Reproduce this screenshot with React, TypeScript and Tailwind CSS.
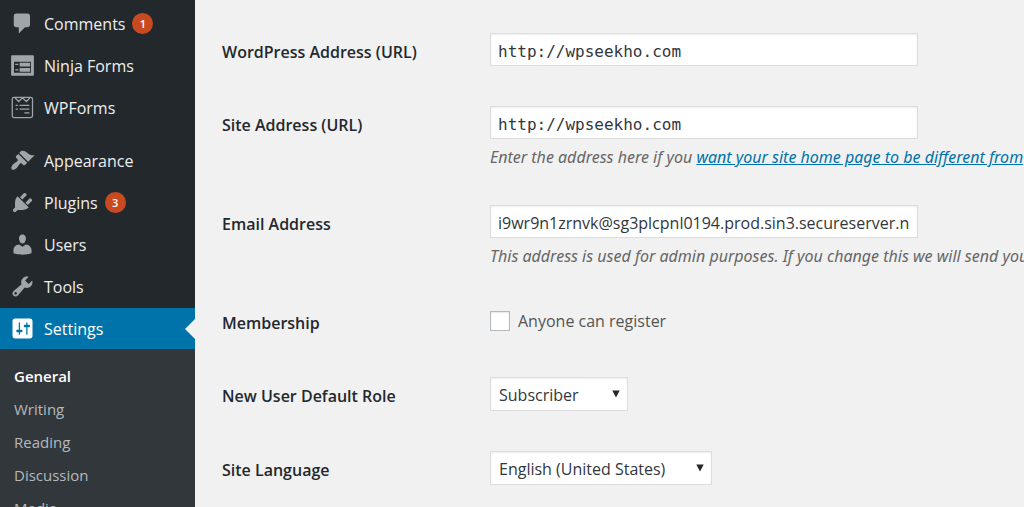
import type { ReactNode } from 'react';

type MenuItem = { label: string; icon: ReactNode; count?: number; current?: boolean };

function Icon({ children }: { children: ReactNode }) {
  return (
    <svg viewBox="0 0 20 20" fill="currentColor" fillRule="evenodd" aria-hidden="true" className="size-[25px] shrink-0">
      {children}
    </svg>
  );
}

const contentItems: MenuItem[] = [
  {
    label: 'Comments',
    count: 1,
    icon: <path d="M5 2h9c1.1 0 2 .9 2 2v7c0 1.1-.9 2-2 2h-2l-5 5v-5H5c-1.1 0-2-.9-2-2V4c0-1.1.9-2 2-2z" />,
  },
  {
    label: 'Ninja Forms',
    icon: (
      <path d="M1.800 1.800h16.400c.5 0 .9.4.9.9v14.600c0 .5-.4.9-.9.9H1.800c-.5 0-.9-.4-.9-.9V2.700c0-.5.4-.9.9-.9zM3.200 7v8.800h13.600V7zM4.200 8.500v1h2.400v-1zM7.700 7.700v3h8.400v-3zM4.200 12.900v1h2.400v-1zM7.700 12v3h8.400v-3z" />
    ),
  },
  {
    label: 'WPForms',
    icon: (
      <g fill="none" stroke="currentColor" strokeWidth="1">
        <rect x="1.800" y="1.800" width="16.200" height="16.200" rx="1.400" />
        <path d="M4 2.200l2.900 3 3.100-3 3.100 3 2.900-3" />
        <path d="M4.500 8.300h1.800M7.700 8.300h7.800M4.500 11.300h1.800M7.700 11.300h7.800M11.500 14.300h4" />
      </g>
    ),
  },
];

const adminItems: MenuItem[] = [
  {
    label: 'Appearance',
    icon: (
      <path d="M14.480 11.060L7.410 3.990l1.500-1.500c.5-.56 2.300-.47 3.510.32 1.210.8 1.430 1.280 2.910 2.100 1.180.64 2.450 1.260 4.450.85zm-.71.71L6.700 4.700 4.930 6.470c-.39.39-.39 1.020 0 1.410l1.060 1.060c.39.39.39 1.030 0 1.420-.6.6-1.430 1.110-2.210 1.690-.35.26-.7.53-1.010.84C1.430 14.230.4 16.080 1.400 17.070c.99 1 2.840-.03 4.180-1.360.31-.31.58-.66.85-1.020.57-.78 1.080-1.610 1.690-2.210.39-.39 1.020-.39 1.410 0l1.060 1.060c.39.39 1.020.39 1.410 0z" />
    ),
  },
  {
    label: 'Plugins',
    count: 3,
    icon: (
      <path d="M13.110 4.360L9.870 7.600 8 5.730l3.240-3.240c.35-.34 1.050-.2 1.560.32.52.51.66 1.210.31 1.550zm-8 1.770l.91-1.120 9.010 9.010-1.190.84c-.71.71-2.630 1.160-3.820 1.160H6.140L4.900 17.260c-.59.59-1.540.59-2.120 0-.59-.58-.59-1.530 0-2.120l1.240-1.240v-3.880c0-1.130.4-3.190 1.090-3.890zm7.260 3.970l3.240-3.240c.34-.35 1.040-.21 1.550.31.52.51.66 1.210.31 1.550l-3.240 3.250z" />
    ),
  },
  {
    label: 'Users',
    icon: (
      <path d="M10 9.250c-2.270 0-2.730-3.440-2.730-3.440C7 4.020 7.820 2 9.970 2c2.160 0 2.980 2.020 2.710 3.810 0 0-.41 3.440-2.680 3.440zm0 2.570L12.720 10c2.390 0 4.520 2.330 4.520 4.530v2.490s-3.650 1.130-7.240 1.130c-3.650 0-7.240-1.130-7.240-1.130v-2.490c0-2.250 1.940-4.480 4.470-4.480z" />
    ),
  },
  {
    label: 'Tools',
    icon: (
      <path d="M16.680 9.770c-1.340 1.340-3.300 1.670-4.950.99l-5.410 6.520c-.99.99-2.590.99-3.580 0s-.99-2.590 0-3.570l6.520-5.420c-.68-1.650-.35-3.610.99-4.950 1.280-1.280 3.120-1.620 4.720-1.060l-2.890 2.890 2.820 2.820 2.860-2.870c.53 1.580.18 3.390-1.080 4.650zM3.810 16.210c.4.39 1.040.39 1.430 0 .4-.4.4-1.040 0-1.430-.39-.4-1.030-.4-1.430 0-.39.39-.39 1.030 0 1.430z" />
    ),
  },
  {
    label: 'Settings',
    current: true,
    icon: (
      <path d="M18 16V4c0-1.100-.9-2-2-2H4c-1.100 0-2 .9-2 2v12c0 1.100.9 2 2 2h12c1.100 0 2-.9 2-2zM8 11h1c.55 0 1 .45 1 1s-.45 1-1 1H8v1.500c0 .28-.22.5-.5.5s-.5-.22-.5-.5V13H6c-.55 0-1-.45-1-1s.45-1 1-1h1V5.500c0-.28.22-.5.5-.5s.5.22.5.5V11zm5-2h-1c-.55 0-1-.45-1-1s.45-1 1-1h1V5.500c0-.28.22-.5.5-.5s.5.22.5.5V7h1c.55 0 1 .45 1 1s-.45 1-1 1h-1v5.500c0 .28-.22.5-.5.5s-.5-.22-.5-.5V9z" />
    ),
  },
];

const settingsPages = ['General', 'Writing', 'Reading', 'Discussion', 'Media'];

function Menu({ items }: { items: MenuItem[] }) {
  return (
    <ul className="flex flex-col gap-px">
      {items.map((item) => (
        <li key={item.label}>
          <a
            href="#"
            aria-current={item.current ? 'page' : undefined}
            className={
              item.current
                ? 'relative flex h-[41px] items-center gap-[9px] bg-[#0073aa] pl-2.5 text-white'
                : 'relative flex h-[41px] items-center gap-[9px] pl-2.5 text-[#eeeeee]'
            }
          >
            <span className={item.current ? 'text-white' : 'text-[#a0a5aa]'}>
              <Icon>{item.icon}</Icon>
            </span>
            <span>{item.label}</span>
            {item.count !== undefined && (
              <span className="-ml-0.5 flex size-[21px] items-center justify-center rounded-full bg-[#ca4a1f] text-[11px] font-semibold text-white">
                {item.count}
              </span>
            )}
            {item.current && (
              <span className="absolute top-1/2 right-0 -translate-y-1/2 border-y-10 border-r-10 border-y-transparent border-r-[#f1f1f1]" />
            )}
          </a>
        </li>
      ))}
    </ul>
  );
}

function Row({ id, label, children }: { id: string; label: string; children: ReactNode }) {
  return (
    <div className="grid grid-cols-[268px_minmax(0,1fr)] py-5">
      <label htmlFor={id} className="pt-[7px] font-semibold text-[#23282d]">
        {label}
      </label>
      <div>{children}</div>
    </div>
  );
}

const fieldClass =
  'block h-[33px] w-[428px] max-w-full border border-[#dddddd] bg-white px-[7px] text-[#32373c] shadow-[inset_0_1px_2px_rgba(0,0,0,0.07)] outline-none';

const descriptionClass =
  "mt-2.5 whitespace-nowrap font-['Noto_Sans',sans-serif] leading-4 text-[#666666] italic";

function Select({ id, value, className }: { id: string; value: string; className: string }) {
  return (
    <div className={className}>
      <select
        id={id}
        defaultValue={value}
        className="block h-[34px] w-full appearance-none border border-[#dddddd] bg-white pt-0.5 pr-6 pl-2 text-[#32373c] shadow-[inset_0_1px_2px_rgba(0,0,0,0.07)] outline-none"
      >
        <option>{value}</option>
      </select>
      <svg
        viewBox="0 0 8 8"
        aria-hidden="true"
        className="pointer-events-none absolute top-1/2 right-2 size-2 -translate-y-1/2 fill-[#23282d]"
      >
        <path d="M0.300 0.500h7.400L4 7.500z" />
      </svg>
    </div>
  );
}

export default function App() {
  return (
    <div className="flex h-screen overflow-hidden bg-[#f1f1f1] font-['Open_Sans','Noto_Sans',sans-serif] text-[16px] leading-6 text-[#555555]">
      <nav aria-label="Main menu" className="w-[195px] shrink-0 bg-[#23282d] pt-[3px]">
        <Menu items={contentItems} />
        <div className="mt-3">
          <Menu items={adminItems} />
        </div>
        <ul className="bg-[#32373c] pt-2.5 text-[15px] text-[#b4b9be]">
          {settingsPages.map((page, index) => (
            <li key={page}>
              <a
                href="#"
                className={
                  index === 0
                    ? 'flex h-[33px] items-center pl-3.5 font-semibold text-white'
                    : 'flex h-[33px] items-center pl-3.5'
                }
              >
                {page}
              </a>
            </li>
          ))}
        </ul>
      </nav>

      <main className="min-w-0 flex-1 overflow-hidden pt-[13px] pl-[27px]">
        <form>
          <Row id="siteurl" label="WordPress Address (URL)">
            <input id="siteurl" type="url" defaultValue="http://wpseekho.com" className={`${fieldClass} pt-1 font-['DejaVu_Sans_Mono',monospace]`} />
          </Row>
          <Row id="home" label="Site Address (URL)">
            <input id="home" type="url" defaultValue="http://wpseekho.com" className={`${fieldClass} pt-1 font-['DejaVu_Sans_Mono',monospace]`} />
            <p className={descriptionClass}>
              Enter the address here if you{' '}
              <a href="#" className="text-[#0073aa] underline">
                want your site home page to be different from
              </a>
            </p>
          </Row>
          <Row id="email" label="Email Address">
            <input
              id="email"
              type="email"
              defaultValue="i9wr9n1zrnvk@sg3plcpnl0194.prod.sin3.secureserver.net"
              className={`${fieldClass} pt-0.5`}
            />
            <p className={descriptionClass}>
              This address is used for admin purposes. If you change this we will send you
            </p>
          </Row>
          <Row id="register" label="Membership">
            <div className="flex h-[33px] items-center gap-2">
              <input
                id="register"
                type="checkbox"
                className="size-5 appearance-none border border-[#b4b9be] bg-white shadow-[inset_0_1px_2px_rgba(0,0,0,0.1)]"
              />
              <label htmlFor="register">Anyone can register</label>
            </div>
          </Row>
          <Row id="role" label="New User Default Role">
            <Select id="role" value="Subscriber" className="relative w-[138px]" />
          </Row>
          <Row id="language" label="Site Language">
            <Select id="language" value="English (United States)" className="relative w-[222px]" />
          </Row>
        </form>
      </main>
    </div>
  );
}
